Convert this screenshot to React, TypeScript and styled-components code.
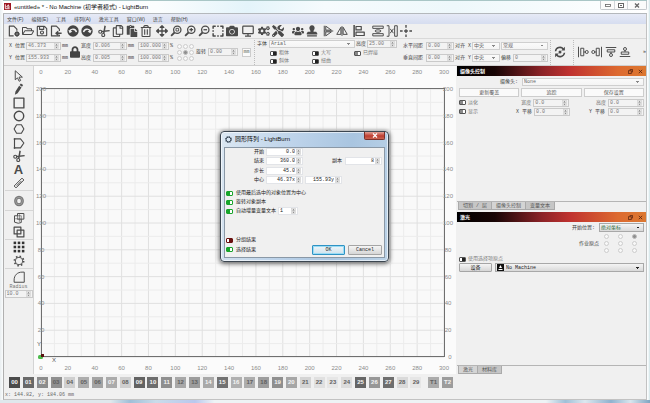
import React from "react";
import styled, { createGlobalStyle, css } from "styled-components";
import { FaCamera, FaCogs, FaTools, FaUsers, FaLock, FaRegFolderOpen, FaRegSave, FaRegTrashAlt, FaArrowsAlt, FaRegCopy, FaPaste } from "react-icons/fa";

const Global = createGlobalStyle`
  * { box-sizing: border-box; }
  body { margin: 0; background: #f0f0f0; }
  body, button, input, select {
    font: 5px/6px "Liberation Mono", "Noto Sans CJK SC", monospace;
    color: #3c3c3c;
  }
  button, input, select { margin: 0; padding: 0; border-radius: 0; }
`;

const Window = styled.div`
  display: flex;
  flex-direction: column;
  min-height: 100vh;
  padding: 0 3px 0 3px;
  background: linear-gradient(90deg, #e9eef0, #fafcfd 3px, #fafcfd calc(100% - 2px), #cfe3e6);
`;

const TitleBar = styled.header`
  display: flex;
  align-items: center;
  gap: 3px;
  height: 14px;
  padding: 0 0 1px 1px;
  border-top: 1px solid #a9c6c6;
  border-bottom: 1px solid #b4b8bc;
  background: linear-gradient(90deg, #ffffff 0%, #fbfdfe 24%, #e4f4fa 38%, #f6fbfd 50%, #eef8fb 70%, #ffffff 100%);
`;

const Title = styled.h1`
  margin: 0;
  flex: 1;
  font: 6px/8px "Liberation Sans", "Noto Sans CJK SC", sans-serif;
  color: #111;
`;

const WinButtons = styled.div`
  display: flex;
  align-self: flex-start;
  border: 1px solid #c4c8cc;
  border-top: 0;
  border-radius: 0 0 2px 2px;
`;

const WinButton = styled.button<{ $wide?: boolean }>`
  display: grid;
  place-items: center;
  width: ${(p) => (p.$wide ? 19 : 13)}px;
  height: 8px;
  border: 0;
  background: #fbfbfb;
  & + & { border-left: 1px solid #d2d6da; }
`;

const Body = styled.div`
  display: flex;
  flex-direction: column;
  flex: 1;
  border: 1px solid #c2c2c2;
  border-top: 0;
  border-left-color: #b0b0b0;
  background: #f0f0f0;
`;

const MenuBar = styled.nav`
  display: flex;
  gap: 8px;
  height: 10px;
  padding: 1px 3px;
  background: linear-gradient(#e6eaf6, #d6ddf0);
`;

const MenuItem = styled.button`
  border: 0;
  background: none;
  font: 5px/8px "Liberation Sans", "Noto Sans CJK SC", sans-serif;
  color: #444;
`;

const ToolBar = styled.div`
  display: flex;
  align-items: center;
  height: 15px;
  padding-left: 3px;
  border-bottom: 1px solid #d9d9d9;
`;

const ToolGroup = styled.div<{ $gap: number }>`
  display: flex;
  margin-left: ${(p) => p.$gap}px;
`;

const ToolButton = styled.button`
  display: grid;
  place-items: center;
  width: 14px;
  height: 13px;
  border: 0;
  background: none;
  color: #4a4a4a;
  svg { width: 12px; height: 12px; display: block; }
`;

const Letter = styled.span`
  font: bold 13px/13px "Liberation Sans", sans-serif;
  color: #4a4a4a;
`;

const Properties = styled.div`
  display: flex;
  align-items: center;
  height: 27px;
  padding-left: 5px;
  border-bottom: 1px solid #d0d0d0;
`;

const Section = styled.div<{ $before?: number; $line?: boolean }>`
  display: flex;
  flex-direction: column;
  justify-content: center;
  gap: 2px;
  height: 25px;
  padding-left: ${(p) => p.$before || 0}px;
  ${(p) => p.$line && css`border-left: 1px dotted #bdbdbd;`}
`;

const Row = styled.div<{ $gap?: number; $h?: number; $pl?: number }>`
  display: flex;
  align-items: center;
  gap: ${(p) => p.$gap ?? 1}px;
  height: ${(p) => p.$h ?? 10}px;
  padding-left: ${(p) => p.$pl || 0}px;
`;

const Text = styled.span<{ $w?: number; $right?: boolean; $dim?: boolean }>`
  flex: none;
  width: ${(p) => (p.$w ? p.$w + "px" : "auto")};
  text-align: ${(p) => (p.$right ? "right" : "left")};
  white-space: nowrap;
  color: ${(p) => (p.$dim ? "#7c7c7c" : "inherit")};
`;

const Field = styled.label<{ $gap?: number; $fill?: boolean }>`
  display: flex;
  align-items: center;
  gap: ${(p) => p.$gap ?? 2}px;
  white-space: nowrap;
  ${(p) => p.$fill && css`flex: 1;`}
`;

const SpinFrame = styled.span<{ $w: number; $bright?: boolean }>`
  display: flex;
  align-items: center;
  width: ${(p) => p.$w}px;
  height: 8px;
  flex: none;
  border: 1px solid ${(p) => (p.$bright ? "#e2e4e8" : "#cacaca")};
  background: ${(p) => (p.$bright ? "#fff" : "#f3f3f3")};
  svg { width: 5px; height: 6px; flex: none; margin-right: 1px; background: #ededed; }
`;

const SpinInput = styled.input<{ $right?: boolean; $bright?: boolean }>`
  flex: 1;
  min-width: 0;
  height: 6px;
  padding: 0 1px;
  border: 0;
  outline: 0;
  background: none;
  text-align: ${(p) => (p.$right ? "right" : "left")};
  color: ${(p) => (p.$bright ? "#222" : "#777")};
`;

function Spin({ w, value, label, right, bright }: { w: number; value: string; label: string; right?: boolean; bright?: boolean }) {
  return (
    <SpinFrame $w={w} $bright={bright}>
      <SpinInput aria-label={label} defaultValue={value} $right={right} $bright={bright} />
      <svg viewBox="0 0 5 6"><rect x=".3" y=".3" width="4.4" height="5.4" fill="none" stroke="#ccc" strokeWidth=".5" /><path d="M1.2 2.4 2.5 1l1.3 1.4zM1.2 3.7 2.5 5l1.3-1.3z" fill="#777" /></svg>
    </SpinFrame>
  );
}

const Select = styled.select<{ $w?: number; $raised?: boolean; $color?: string; $pl?: number }>`
  appearance: none;
  flex: ${(p) => (p.$w ? "none" : "1")};
  width: ${(p) => (p.$w ? p.$w + "px" : "auto")};
  min-width: 0;
  height: ${(p) => (p.$raised ? 9 : 8)}px;
  padding-left: ${(p) => p.$pl ?? 1}px;
  border: 1px solid ${(p) => (p.$raised ? "#a8a8a8" : "#cfcfcf")};
  color: ${(p) => p.$color || "#666"};
  background:
    linear-gradient(135deg, ${(p) => (p.$raised ? "#222" : "#888")} 50%, transparent 50%) right 3px center / 2px 2px no-repeat,
    linear-gradient(225deg, ${(p) => (p.$raised ? "#222" : "#888")} 50%, transparent 50%) right 5px center / 2px 2px no-repeat,
    ${(p) => (p.$raised ? "linear-gradient(#f4f4f4, #d9d9d9)" : "linear-gradient(#fafafa, #f4f4f4)")};
`;

const Toggle = styled.input.attrs({ type: "checkbox" })<{ $tone?: string }>`
  appearance: none;
  flex: none;
  width: 7px;
  height: 5px;
  border: 1px solid ${(p) => p.$tone || "#555"};
  border-radius: 1px;
  background: linear-gradient(90deg, #fff 40%, ${(p) => p.$tone || "#222"} 40%);
  &:checked {
    background: linear-gradient(90deg, ${(p) => p.$tone || "#888"} 60%, #fff 60%);
    border-color: ${(p) => p.$tone || "#555"};
  }
`;

const RadioGrid = styled.div<{ $cell: number; $row: number }>`
  display: grid;
  grid-template-columns: repeat(3, ${(p) => p.$cell}px);
  grid-auto-rows: ${(p) => p.$row}px;
  place-items: center;
`;

const Radio = styled.input.attrs({ type: "radio" })`
  appearance: none;
  width: 5px;
  height: 5px;
  margin: 0;
  border: 1px solid #cdcdcd;
  border-radius: 50%;
  background: #f8f8f8;
  &:checked { background: #909090; border-color: #bcbcbc; }
`;

const UnitButton = styled.button`
  width: 9px;
  height: 9px;
  border: 1px solid #ccc;
  background: #fafafa;
  color: #666;
`;

const PadlockButton = styled.button`
  display: grid;
  place-items: center;
  width: 13px;
  border: 0;
  background: none;
  color: #444;
  svg { width: 10px; height: 12px; }
`;

const IconStrip = styled.div`
  display: flex;
  align-items: center;
  height: 25px;
  padding: 0 2px;
  border-left: 1px dotted #bdbdbd;
`;

const Main = styled.main`
  display: grid;
  grid-template-columns: 30px 1fr 190px;
  flex: 1;
`;

const Rail = styled.aside`
  display: flex;
  flex-direction: column;
  align-items: center;
  padding-top: 3px;
  border-right: 1px solid #d4d4d4;
`;

const RailGroup = styled.div<{ $h: number }>`
  display: grid;
  grid-auto-rows: 1fr;
  align-items: center;
  justify-items: center;
  width: 28px;
  height: ${(p) => p.$h}px;
  border-bottom: 1px solid #d6d6d6;
  &:last-of-type { border-bottom: 0; }
`;

const RadiusBox = styled.label`
  display: flex;
  flex-direction: column;
  align-items: center;
  color: #777;
`;

const Canvas = styled.section`
  background: #fbfbfb;
  min-width: 0;
  svg { display: block; width: 100%; height: auto; }
  text { font: 6px "Liberation Sans", sans-serif; fill: #8b8b8b; text-anchor: middle; }
  .axis { fill: #555; }
`;

const Panels = styled.aside`
  display: flex;
  flex-direction: column;
  padding-left: 1px;
`;

const Dock = styled.section<{ $grow?: boolean }>`
  display: flex;
  flex-direction: column;
  ${(p) => (p.$grow ? css`flex: 1;` : css`height: 146px; padding-bottom: 2px;`)}
`;

const DockTitle = styled.h2`
  display: flex;
  align-items: center;
  gap: 5px;
  height: 10px;
  margin: 0;
  padding: 0 3px;
  background: linear-gradient(90deg, #000 0%, #180505 20%, #8c2327 45%, #c0322f 60%, #dd6a30 85%, #dc7830 100%);
  color: #fff;
  font: bold 5px/8px "Liberation Sans", "Noto Sans CJK SC", sans-serif;
  span { flex: 1; }
  svg { width: 5px; height: 5px; }
`;

const DockBody = styled.div`
  flex: 1;
  display: flex;
  flex-direction: column;
  padding: 1px 2px 0;
  border-bottom: 1px solid #b5b5b5;
`;

const CamGrid = styled.div`
  display: grid;
  grid-template-columns: repeat(3, 1fr);
  column-gap: 2px;
  row-gap: 0;
  align-items: center;
`;

const FlatButton = styled.button`
  height: 9px;
  margin: 1px 0;
  border: 1px solid #cdcdcd;
  background: #fafafa;
  color: #555;
`;

const Cell = styled.div<{ $end?: boolean }>`
  display: flex;
  align-items: center;
  height: 9px;
  color: #6c6c6c;
  justify-content: ${(p) => (p.$end ? "flex-end" : "flex-start")};
`;

const Tabs = styled.div`
  display: flex;
  padding-left: 1px;
`;

const Tab = styled.button<{ $active?: boolean }>`
  height: 8px;
  padding: 0 4px;
  border: 1px solid #aaa;
  border-top: 0;
  background: ${(p) => (p.$active ? "#d4d4d4" : "#c6c6c6")};
  color: #555;
  & + & { border-left: 0; }
`;

const Origin = styled.div`
  display: flex;
  align-items: center;
  justify-content: flex-end;
  height: 23px;
  margin-right: 3px;
`;

const DeviceRow = styled.div`
  display: grid;
  grid-template-columns: 33px 1fr;
  gap: 3px;
  height: 9px;
`;

const RaisedButton = styled.button<{ $primary?: boolean; $w?: number }>`
  width: ${(p) => (p.$w ? p.$w + "px" : "auto")};
  height: ${(p) => (p.$w ? 10 : 9)}px;
  border: 1px solid ${(p) => (p.$primary ? "#2f93c4" : "#a5a5a5")};
  border-radius: 1px;
  background: linear-gradient(#f5f5f5, #d6d6d6);
  color: #222;
  ${(p) => p.$primary && css`box-shadow: inset 0 0 0 1px #9adcf5; background: linear-gradient(#eef6fa, #cfe2ec);`}
`;

const MachineSelect = styled.div`
  display: grid;
  grid-template-columns: 1fr;
  align-items: center;
  select, svg { grid-area: 1 / 1; }
  svg { width: 7px; height: 7px; margin-left: 2px; pointer-events: none; z-index: 1; }
`;

const Palette = styled.div`
  display: flex;
  justify-content: space-between;
  height: 15px;
  padding: 3px 193px 0 5px;
`;

const Swatches = styled.div<{ $w?: string }>`
  display: flex;
  justify-content: space-between;
  width: ${(p) => p.$w || "auto"};
`;

const Swatch = styled.button<{ $shade: string; $dark?: boolean }>`
  width: 11px;
  height: 11px;
  border: 0;
  background: ${(p) => p.$shade};
  color: ${(p) => (p.$dark ? "#606060" : "#f4f4f4")};
  font: bold 6px/11px "Liberation Sans", sans-serif;
`;

const StatusBar = styled.footer`
  height: 10px;
  padding: 2px 0 0 1px;
  color: #666;
  line-height: 8px;
`;

const DesktopEdge = styled.div`
  height: 4px;
  margin: 0 -3px;
  background: linear-gradient(90deg, #dfe8ec 0 17%, #9fbfd8 20%, #cadcea 24%, #b9c8ee 30%, #eef3f5 33%, #eef3f5 84%, #9fc0d8 87%, #dde8ef 90%, #8fb2cf 94%, #d8e6ee 97%, #7fa5c2 100%);
`;

const Dialog = styled.section`
  position: absolute;
  left: calc(50% - 105px);
  top: calc(50% - 71px);
  width: 169px;
  padding: 0 3px 3px;
  border: 1px solid #3c4650;
  border-radius: 4px;
  background: linear-gradient(100deg, #dbe7f2, #bdd3ea 40%, #a9c5e0 70%, #bcd3e8);
  box-shadow: 0 1px 4px 1px rgba(0, 0, 0, 0.55), inset 0 0 0 1px rgba(255, 255, 255, 0.6);
`;

const DialogTitle = styled.header`
  display: flex;
  align-items: center;
  gap: 3px;
  height: 15px;
  padding-left: 1px;
  > svg { width: 7px; height: 7px; }
`;

const DialogHeading = styled.h2`
  flex: 1;
  margin: 0;
  font: 6px/10px "Liberation Sans", "Noto Sans CJK SC", sans-serif;
  color: #111;
`;

const CloseButton = styled.button`
  display: grid;
  place-items: center;
  align-self: flex-start;
  width: 21px;
  height: 8px;
  border: 1px solid #7d3029;
  border-top: 0;
  border-radius: 0 0 2px 2px;
  background: linear-gradient(#e0a398, #c4473a 50%, #b83a2e 51%, #cc6350);
`;

const DialogBody = styled.form`
  display: flex;
  flex-direction: column;
  height: 111px;
  padding: 0 2px 2px 1px;
  border: 1px solid #8a98a6;
  background: #f0f0f0;
  color: #222;
`;

const Form = styled.div`
  display: grid;
  grid-template-columns: 38px 37px 37px 1fr;
  grid-template-rows: 9px 9px 10px 9px;
  column-gap: 2px;
  align-items: center;
`;

const Span = styled.div`
  grid-column: 3 / 5;
  display: flex;
  justify-content: flex-end;
`;

const Spacer = styled.div`
  flex: 1;
`;

const Actions = styled.div`
  display: flex;
  align-items: center;
  gap: 3px;
`;

const Svg = ({ children, w = 1.6 }: { children: React.ReactNode; w?: number }) => (
  <svg viewBox="0 0 16 16" fill="none" stroke="currentColor" strokeWidth={w} strokeLinejoin="round">{children}</svg>
);

const scissors = (
  <Svg w={1.5}><circle cx="3" cy="9" r="2" /><circle cx="7" cy="13.3" r="2" /><path d="M5 8.700 15.500 7.500M7.700 11.300 9.500 1" strokeWidth="2" /></Svg>
);
const lens = (inner: React.ReactNode) => (
  <Svg w={1.7}><circle cx="9.700" cy="6.300" r="4.900" /><path d="M6 10 1.500 14.500" strokeWidth="2.400" />{inner}</Svg>
);

const fileTools: [string, React.ReactNode][] = [
  ["New", <Svg><path d="M7.500 14.500H1.800v-13h6l4 4v2" /><circle cx="12" cy="12" r="2.300" strokeWidth="2" /><path d="M12 8.300v7.400M8.300 12h7.400" strokeWidth="1.200" /></Svg>],
  ["Open", <FaRegFolderOpen />],
  ["Save", <FaRegSave />],
  ["Import", <Svg><path d="M12.500 8V5.500l-4-4H2v13h10.500v-1.500" /><path d="M15.500 11H8.500M11 8.500 8 11l3 2.500" strokeWidth="2" /></Svg>],
];
const disc = (flip: boolean) => (
  <svg viewBox="0 0 16 16"><g transform={flip ? "matrix(-1 0 0 1 16 0)" : undefined}><circle cx="8" cy="8" r="7.600" fill="#444" /><path d="M3.500 8.500a4.700 4.700 0 0 1 9 1" stroke="#f0f0f0" strokeWidth="1.900" fill="none" /><path d="m1.800 6.500 1.700 4.500 3.700-2.500z" fill="#f0f0f0" /></g></svg>
);
const editTools: [string, React.ReactNode][] = [["Undo", disc(false)], ["Redo", disc(true)]];
const clipTools: [string, React.ReactNode][] = [["Cut", scissors], ["Copy", <FaRegCopy />], ["Paste", <FaPaste />], ["Delete", <FaRegTrashAlt />]];
const viewTools: [string, React.ReactNode][] = [
  ["Pan", <FaArrowsAlt />],
  ["Zoom to page", lens(<path d="M8 4.500h3.500V8H8z" strokeWidth="1.200" />)],
  ["Zoom in", lens(<path d="M7.300 6.300h4.800M9.700 3.900v4.800" />)],
  ["Zoom out", lens(<path d="M7.300 6.300h4.800" />)],
  ["Frame selection", <Svg w={2}><path d="M1.500 5V1.500H5M11 1.500h3.500V5M14.500 11v3.500H11M5 14.500H1.500V11M7 1.500h2M7 14.500h2M1.500 7v2M14.500 7v2" /></Svg>],
  ["Camera", <FaCamera />],
];
const previewTools: [string, React.ReactNode][] = [["Preview", <Svg><rect x="1" y="1.500" width="14" height="10" rx="1" /><path d="M8 11.500V14M4 14.800h8" /></Svg>]];
const setupTools: [string, React.ReactNode][] = [["Settings", <FaCogs />], ["Device settings", <FaTools />]];
const userTools: [string, React.ReactNode][] = [
  ["Users", <FaUsers />],
  ["User", <svg viewBox="0 0 16 16" fill="currentColor"><path d="M8 .5a3.500 3.500 0 0 1 3.300 4.800C10.700 6.700 10 7.300 10 9h3.500l1.500 2v1.500H1V11l1.500-2H6c0-1.700-.7-2.300-1.300-3.700A3.500 3.500 0 0 1 8 .5zM1.500 13.500h13v1.800h-13z" /></svg>],
];
const mirrorTools: [string, React.ReactNode][] = [
  ["Flip vertical", <Svg w={1.3}><path d="M3 1v14M5 1.500 12.500 6.800H5zM5 14.500 12.500 9.200H5zM3 8h12" /></Svg>],
  ["Flip horizontal", <Svg w={1.3}><path d="M6.500 3v9.500H1zM9.500 3v9.500H15zM8 1.500v13" /></Svg>],
];
const alignTools: [string, React.ReactNode][] = [["Align left", <Svg><path d="M1.500 0v16" strokeWidth="2" /><rect x="4" y="2" width="7" height="4.500" /><rect x="4" y="9.500" width="11" height="4.500" /></Svg>]];
const spreadTools: [string, React.ReactNode][] = [
  ["Distribute vertically", <Svg w={1.3}><path d="M1 4.500v-3h14v3zM1 11.500v3h14v-3z" /><ellipse cx="8" cy="8" rx="4" ry="1.600" /></Svg>],
  ["Distribute horizontally", <Svg w={1.3}><path d="M1 1h3v14H1M11.500 1H15v14h-3.500z" /><path d="m5.500 5 4.500 6M10 5l-4.500 6" /></Svg>],
  ["Center", <Svg w={1.8}><path d="M8 0v3.500M8 12.500V16M0 8h3.500M12.500 8H16M5.500 8h5M8 5.500v5" /></Svg>],
];
const toolGroups: [number, [string, React.ReactNode][]][] = [
  [0, fileTools], [3, editTools], [3, clipTools], [2, viewTools], [2, previewTools], [2, setupTools], [6, userTools], [2, mirrorTools], [3, alignTools], [5, spreadTools],
];

const drawTools: [string, React.ReactNode][] = [
  ["Select", <Svg w={1.3}><path d="M3 1v12l3-2.500 2.200 4.500 2-1L8 9.500h4.500z" /></Svg>],
  ["Draw lines", <svg viewBox="0 0 16 16" fill="currentColor"><path d="m10.500.5 3 2.300-1.500 2.300-3.200-2.500zM8.200 3.500l3.200 2.500-5.200 7.500L2.500 15.500l.8-4.300z" /></svg>],
  ["Rectangle", <Svg w={1.8}><path d="M1.500 1.500h13v13h-13z" /></Svg>],
  ["Ellipse", <Svg w={1.9}><circle cx="8" cy="8" r="6.300" /></Svg>],
  ["Polygon", <Svg w={1.5}><path d="M4.800 2.300h6.400L14.500 8l-3.300 5.700H4.800L1.500 8z" /></Svg>],
  ["Edit nodes", <Svg w={1.5}><path d="M2 14.500v-12h8l4.500 5.500-4.500 6.500z" /><path d="M1 1.500h2v2H1zM1 13.500h2v2H1z" fill="currentColor" stroke="none" /></Svg>],
  ["Trim shapes", scissors],
  ["Text", <Letter>A</Letter>],
  ["Measure", <Svg w={1.3}><path d="m1.500 12 10.500-10.500 2.500 2.500L4 14.500zM5 11.500l6-6" /></Svg>],
];
const shapeTools: [string, React.ReactNode][] = [
  ["Weld", <Svg w={1.3}><path d="M2 5h4V2h8.500v7.500H11V14l-4 1-5-1.500z" /><path d="M6 5h5v4.500M6 5v5h5M3 9h8M8.500 3v10" strokeWidth=".8" /></Svg>],
  ["Boolean", <Svg><path d="M1.500 1.500h9v9h-9zM5.500 5.500h9v9h-9z" /></Svg>],
];
const dots = [2.5, 8, 13.5];
const arrayTools: [string, React.ReactNode][] = [
  ["Grid array", <svg viewBox="0 0 16 16" fill="#333">{dots.map((x) => dots.map((y) => <rect key={x + "-" + y} x={x - 1.7} y={y - 1.7} width="3.400" height="3.400" />))}</svg>],
  ["Circular array", <Svg><circle cx="8" cy="8" r="5" strokeWidth="1.200" /><circle cx="8" cy="8" r="6.200" strokeWidth="2.200" strokeDasharray="2 2.870" /></Svg>],
];

const swatches: [string, string, boolean?][] = [
  ["00", "#4b4b4b"], ["01", "#696969"], ["02", "#8c8c8c"], ["03", "#8f8f8f", true], ["04", "#cfcfcf", true], ["05", "#adadad", true],
  ["06", "#a3a3a3", true], ["07", "#ababab"], ["08", "#cfcfcf", true], ["09", "#636363"], ["10", "#6d6d6d"], ["11", "#8f8f8f"],
  ["12", "#a8a8a8", true], ["13", "#9c9c9c", true], ["14", "#a9a9a9"], ["15", "#727272"], ["16", "#b0b0b0"], ["17", "#adadad", true],
  ["18", "#9d9d9d", true], ["19", "#8f8f8f"], ["20", "#a6a6a6"], ["21", "#d4d4d4", true], ["22", "#e0e0e0", true], ["23", "#e6e6e6", true],
  ["24", "#dcdcdc", true], ["25", "#666666"], ["26", "#979797"], ["27", "#6e6e6e"], ["28", "#dadada", true], ["29", "#e6e6e6", true],
];

function Buttons({ items }: { items: [string, React.ReactNode][] }) {
  return <>{items.map(([name, icon]) => <ToolButton key={name} aria-label={name}>{icon}</ToolButton>)}</>;
}

function WorkArea() {
  const left = 7, right = 410, top = 23, bottom = 291;
  const xs = Array.from({ length: 31 }, (_, i) => left + (i * (right - left)) / 30);
  const ys = Array.from({ length: 21 }, (_, i) => bottom - (i * (bottom - top)) / 20);
  return (
    <Canvas>
      <svg viewBox="0 0 422 308" role="img" aria-label="Work area">
        <rect x={left} y={top} width={right - left} height={bottom - top} fill="#f9f9f9" />
        {xs.map((x, i) => <line key={i} x1={x} x2={x} y1={top} y2={bottom} stroke={i % 2 ? "#ececec" : "#e0e0e0"} />)}
        {ys.map((y, i) => <line key={i} x1={left} x2={right} y1={y} y2={y} stroke={i % 2 ? "#ececec" : "#e0e0e0"} />)}
        <rect x={left + 0.5} y={top - 0.5} width={right - left} height={bottom - top} fill="none" stroke="#6f6f6f" />
        {xs.map((x, i) => i % 2 === 0 && <g key={i}><text x={x} y="8">{i * 10}</text><text x={x} y="304">{i * 10}</text></g>)}
        {ys.map((y, i) => i % 2 === 0 && <g key={i}>{i > 0 && <text x="7" y={y + 2}>{i * 10}</text>}<text x={i ? 414 : 416} y={y + 2}>{i * 10}</text></g>)}
        <text className="axis" x="5" y="280">Y</text>
        <text className="axis" x="20" y="296">X</text>
        <rect x="4" y="289" width="5" height="4" rx="1.500" fill="#4dbb4d" />
        <rect x="7" y="288" width="3" height="3" fill="#5a1111" />
      </svg>
    </Canvas>
  );
}

const pinIcon = <svg viewBox="0 0 6 6" fill="none" stroke="#5a2410"><path d="M2 .5h3.500V4M.5 2H4v3.500H.5z" /></svg>;
const crossIcon = <svg viewBox="0 0 6 6" fill="none" stroke="#5a2410"><path d="m1 1 4 4M5 1 1 5" /></svg>;

function RadioSet({ name, picked, cell, row }: { name: string; picked: number; cell: number; row: number }) {
  return (
    <RadioGrid $cell={cell} $row={row}>
      {Array.from({ length: 9 }, (_, i) => <Radio key={i} name={name} aria-label={name + " " + (i + 1)} defaultChecked={i === picked} />)}
    </RadioGrid>
  );
}

export default function App() {
  return (
    <Window>
      <Global />
      <TitleBar>
        <svg width="7" height="7" viewBox="0 0 8 8"><rect width="8" height="8" fill="#9c1420" /><path d="M1.500 1.500v5h5M3 4.500 5 2l1 3z" stroke="#fff" fill="none" /></svg>
        <Title>«untitled» * - No Machine (初学者模式) - LightBurn</Title>
        <WinButtons>
          <WinButton aria-label="Minimize"><svg width="6" height="4" viewBox="0 0 6 4"><rect x=".5" y="1.500" width="5" height="2" fill="#fff" stroke="#666" strokeWidth=".8" /></svg></WinButton>
          <WinButton aria-label="Maximize"><svg width="6" height="5" viewBox="0 0 6 5"><rect x=".5" y=".5" width="5" height="4" fill="#fff" stroke="#666" /><path d="M2 2.500h2" stroke="#666" /></svg></WinButton>
          <WinButton $wide aria-label="Close"><svg width="6" height="5" viewBox="0 0 6 5"><path d="m1 .5 4 4M5 .5l-4 4" stroke="#666" strokeWidth="1.300" /></svg></WinButton>
        </WinButtons>
      </TitleBar>
      <Body>
        <MenuBar>
          {["文件(F)", "编辑(E)", "工具", "排列(A)", "激光工具", "窗口(W)", "语言", "帮助(H)"].map((m) => <MenuItem key={m}>{m}</MenuItem>)}
        </MenuBar>
        <ToolBar>
          {toolGroups.map(([gap, items], i) => <ToolGroup key={i} $gap={gap}><Buttons items={items} /></ToolGroup>)}
        </ToolBar>
        <Properties>
          <Section>
            <Row><Text $w={16}>X 位置</Text><Spin w={35} value="46.373" label="X 位置" /><Text>mm</Text></Row>
            <Row><Text $w={16}>Y 位置</Text><Spin w={35} value="155.933" label="Y 位置" /><Text>mm</Text></Row>
          </Section>
          <PadlockButton aria-label="Lock aspect ratio"><FaLock /></PadlockButton>
          <Section>
            <Row><Text $w={11}>宽度</Text><Spin w={34} value="0.006" label="宽度" /><Text $w={9}>mm</Text><Spin w={31} value="100.000" label="宽度 %" /><Text>%</Text></Row>
            <Row><Text $w={11}>高度</Text><Spin w={34} value="0.005" label="高度" /><Text $w={9}>mm</Text><Spin w={31} value="100.000" label="高度 %" /><Text>%</Text></Row>
          </Section>
          <Section $before={3}><RadioSet name="anchor" picked={4} cell={6} row={6} /></Section>
          <Section $before={2}><Row><Text $w={11}>旋转</Text><Spin w={30} value="0.00" label="旋转" /></Row></Section>
          <Section $before={4}><UnitButton>mm</UnitButton></Section>
          <Row $pl={3} />
          <Section $before={2} $line>
            <Row $h={8}>
              <Field><Text>字体</Text><Select $w={86}><option>Arial</option></Select></Field>
              <Field $gap={1}><Text>高度</Text><Spin w={30} value="25.00" label="字体高度" /></Field>
            </Row>
            <Row $h={6} $pl={13}>
              <Field><Toggle /><Text $w={32} $dim>粗体</Text></Field><Field><Toggle /><Text $w={32} $dim>大写</Text></Field><Field><Toggle defaultChecked /><Text $dim>已焊接</Text></Field>
            </Row>
            <Row $h={6} $pl={13}>
              <Field><Toggle /><Text $w={32} $dim>斜体</Text></Field><Field><Toggle /><Text $dim>扭曲</Text></Field>
            </Row>
          </Section>
          <Section $before={6}>
            <Row><Text $w={22}>水平间距</Text><Spin w={28} value="0.00" label="水平间距" /><Text $w={16}>对齐 X</Text><Select $w={28} aria-label="对齐 X"><option>中央</option></Select><Select $w={47} aria-label="模式"><option>常规</option></Select></Row>
            <Row><Text $w={22}>垂直间距</Text><Spin w={28} value="0.00" label="垂直间距" /><Text $w={16}>对齐 Y</Text><Select $w={28} aria-label="对齐 Y"><option>中央</option></Select><Text $w={11}>偏移</Text><Spin w={35} value="0" label="偏移" /></Row>
          </Section>
          <Row $pl={2} />
          <IconStrip>
            <Row $gap={0} $h={14}><ToolButton aria-label="Refresh"><Svg w={2}><path d="M2 7a6 6 0 0 1 10.500-3M14 9a6 6 0 0 1-10.500 3" /><path d="M14.500 1v5h-5zM1.500 15v-5h5z" fill="currentColor" stroke="none" /><circle cx="8" cy="8" r="2" fill="currentColor" stroke="none" /></Svg></ToolButton></Row>
            <Row $pl={4} />
          </IconStrip>
          <IconStrip>
            <ToolButton aria-label="Move left"><Svg w={1.3}><path d="M2 1v14M5 3h4v10H5zM9 8h2" /><circle cx="13" cy="8" r="2" /></Svg></ToolButton>
            <ToolButton aria-label="Move right"><Svg w={1.3}><path d="M14 1v14M7 3h4v10H7zM5 8h2" /><circle cx="3" cy="8" r="2" /></Svg></ToolButton>
            <ToolButton aria-label="Move up"><Svg w={1.3}><path d="M1 2h14M3 5h10v3H3zM8 8v2" /><circle cx="8" cy="12" r="2" /></Svg></ToolButton>
            <ToolButton aria-label="Move down"><Svg w={1.3}><path d="M1 14h14M3 8h10v3H3zM8 8V6" /><circle cx="8" cy="4" r="2" /></Svg></ToolButton>
          </IconStrip>
          <Spacer /><Text>»</Text>
        </Properties>
        <Main>
          <Rail>
            <RailGroup $h={122}><Buttons items={drawTools} /></RailGroup>
            <RailGroup $h={20}><ToolButton aria-label="Offset"><Svg w={4}><ellipse cx="8" cy="8" rx="4.500" ry="5" stroke="#777" /><ellipse cx="8" cy="8" rx="4.500" ry="5" stroke="#aaa" strokeWidth="1" /></Svg></ToolButton></RailGroup>
            <RailGroup $h={29}><Buttons items={shapeTools} /></RailGroup>
            <RailGroup $h={29}><Buttons items={arrayTools} /></RailGroup>
            <RailGroup $h={15}><ToolButton aria-label="Fillet"><Svg w={1.3}><path d="M1.500 15V12C1.500 5.500 6 1.500 12 1.500h3V15z" /></Svg></ToolButton></RailGroup>
            <RadiusBox><span>Radius</span><Spin w={28} value="10.0" label="Radius" /></RadiusBox>
          </Rail>
          <WorkArea />
          <Panels>
            <Dock>
              <DockTitle><span>摄像头控制</span>{pinIcon}{crossIcon}</DockTitle>
              <DockBody>
                <Row><Field $gap={4} $fill><Text $w={59} $right>摄像头:</Text><Select><option>None</option></Select></Field></Row>
                <CamGrid>
                  <FlatButton>更新覆盖</FlatButton><FlatButton>追踪</FlatButton><FlatButton>保存设置</FlatButton>
                  <Cell><Field><Toggle defaultChecked />淡化</Field></Cell>
                  <Cell><Text $w={12}>宽度</Text><Spin w={36} value="0.0" label="宽度" /></Cell>
                  <Cell $end><Text $w={12}>高度</Text><Spin w={36} value="0.0" label="高度" /></Cell>
                </CamGrid>
                <Row $gap={0} $h={9}>
                  <Field $fill><Toggle defaultChecked /><Text $dim>显示</Text></Field>
                  <Text $w={18}>X 平移</Text><Spin w={36} value="0.0" label="X 平移" />
                  <Text $w={38} $right>Y 平移&nbsp;</Text><Spin w={36} value="0.0" label="Y 平移" />
                </Row>
              </DockBody>
              <Tabs><Tab>切割 / 层</Tab><Tab $active>摄像头控制</Tab><Tab>变量文本</Tab></Tabs>
            </Dock>
            <Dock $grow>
              <DockTitle><span>激光</span>{pinIcon}{crossIcon}</DockTitle>
              <DockBody>
                <Row $h={9}><Spacer /><Field $gap={4}><Text>开始位置:</Text><Select $w={45} $raised $color="#2c6b38"><option>绝对坐标</option></Select></Field></Row>
                <Origin><Text>作业原点</Text><RadioSet name="origin" picked={2} cell={14} row={7} /></Origin>
                <Row $h={8}><Field><Toggle /><Text $dim>使用选择项原点</Text></Field></Row>
                <DeviceRow>
                  <RaisedButton>设备</RaisedButton>
                  <MachineSelect>
                    <Select $raised $color="#222" $pl={10} aria-label="设备"><option>No Machine</option></Select>
                    <svg viewBox="0 0 7 7"><rect width="7" height="7" fill="#111" /><path d="M3.500 1 5 4H2zM1.500 5h4v1h-4z" fill="#fff" /></svg>
                  </MachineSelect>
                </DeviceRow>
              </DockBody>
              <Tabs><Tab $active>激光</Tab><Tab>材料库</Tab></Tabs>
            </Dock>
          </Panels>
        </Main>
        <Palette>
          <Swatches $w="93%">{swatches.map(([n, shade, dark]) => <Swatch key={n} $shade={shade} $dark={dark}>{n}</Swatch>)}</Swatches>
          <Swatches $w="25px"><Swatch $shade="#ababab" $dark>T1</Swatch><Swatch $shade="#9c9c9c">T2</Swatch></Swatches>
        </Palette>
        <StatusBar>x: 144.82, y: 184.06 mm</StatusBar>
      </Body>
      <DesktopEdge />

      <Dialog role="dialog" aria-label="圆形阵列">
        <DialogTitle>
          <svg viewBox="0 0 16 16" fill="none" stroke="#2c3a4a"><circle cx="8" cy="8" r="5.500" strokeWidth="2" /><circle cx="8" cy="8" r="6.500" strokeWidth="2.400" strokeDasharray="2.500 2.600" /></svg>
          <DialogHeading>圆形阵列 - LightBurn</DialogHeading>
          <CloseButton aria-label="Close"><svg width="6" height="5" viewBox="0 0 6 5"><path d="m1 .5 4 4M5 .5l-4 4" stroke="#fff" strokeWidth="1.200" /></svg></CloseButton>
        </DialogTitle>
        <DialogBody onSubmit={(e) => e.preventDefault()}>
          <Form>
            <Text $right>开始</Text><Spin w={37} value="0.0" label="开始" right bright /><span /><span />
            <Text $right>结束</Text><Spin w={37} value="360.0" label="结束" right bright />
            <Span><Field $gap={3}><Text>副本</Text><Spin w={37} value="8" label="副本" right bright /></Field></Span>
            <Text $right>步长</Text><Spin w={37} value="45.0" label="步长" right bright /><span /><span />
            <Text $right>中心</Text><Spin w={37} value="46.37x" label="中心 X" right bright /><Spin w={37} value="155.93y" label="中心 Y" right bright /><span />
          </Form>
          <Row $h={4} />
          <Row $h={9}><Field $gap={3}><Toggle $tone="#18a52b" defaultChecked />使用最后选中的对象位置为中心</Field></Row>
          <Row $h={9}><Field $gap={3}><Toggle $tone="#18a52b" defaultChecked />旋转对象副本</Field></Row>
          <Row $h={9} $gap={2}><Field $gap={3}><Toggle $tone="#18a52b" defaultChecked />自动增量变量文本</Field><Spin w={20} value="1" label="增量" bright /></Row>
          <Spacer />
          <Row $h={9}><Field $gap={3}><Toggle $tone="#6b1010" />分组结果</Field></Row>
          <Actions>
            <Field $gap={3} $fill><Toggle $tone="#18a52b" defaultChecked />选择结果</Field>
            <RaisedButton $primary $w={33}>OK</RaisedButton>
            <RaisedButton $w={34} type="button">Cancel</RaisedButton>
          </Actions>
        </DialogBody>
      </Dialog>
    </Window>
  );
}
